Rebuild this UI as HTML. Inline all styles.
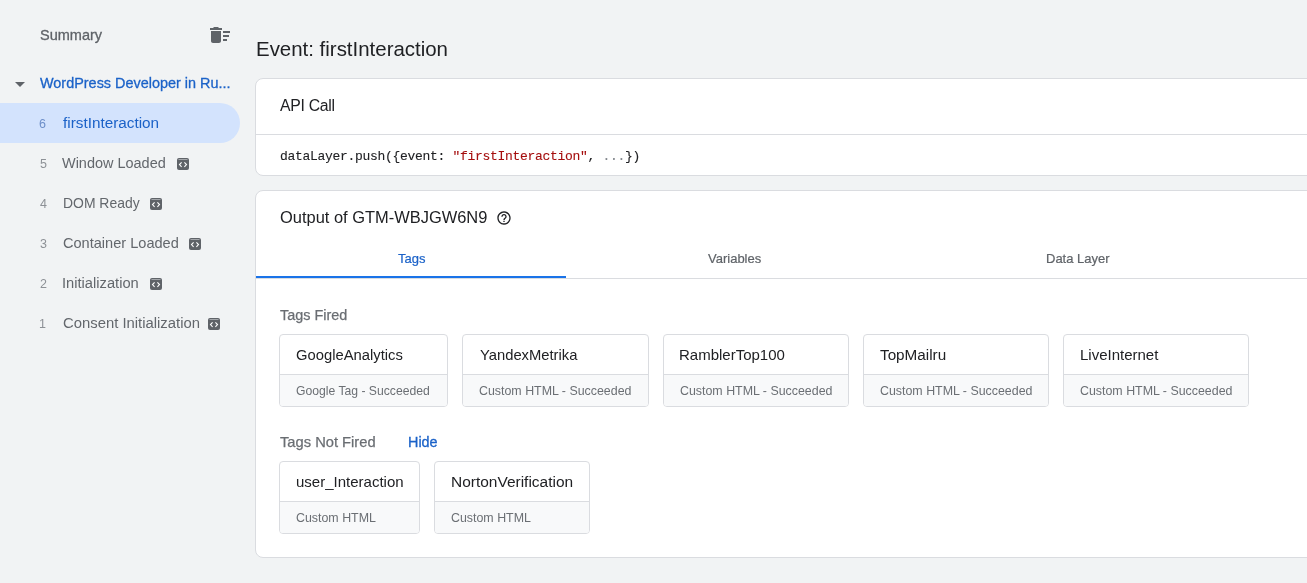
<!DOCTYPE html>
<html><head><meta charset="utf-8">
<style>
*{box-sizing:border-box;margin:0;padding:0}
html,body{width:1307px;height:583px;overflow:hidden;background:#f1f3f4;font-family:"Liberation Sans",sans-serif;color:#202124;position:relative}
.t{position:absolute;white-space:nowrap;will-change:transform}
.ic{position:absolute}
.card{position:absolute;left:255px;width:1100px;background:#fff;border:1px solid #dadce0;border-radius:8px}
.tag{position:absolute;height:73px;background:#fff;border:1px solid #dadce0;border-radius:4px;overflow:hidden}
.tag .h{height:40px;border-bottom:1px solid #dadce0}
.tag .f{height:31px;background:#f8f9fa}
</style></head><body>
<svg class="ic" style="left:208px;top:23px" width="24" height="24" viewBox="0 0 24 24"><path d="M15 16h4v2h-4zm0-8h7v2h-7zm0 4h6v2h-6zM3 18c0 1.1.9 2 2 2h6c1.1 0 2-.9 2-2V8H3v10zM14 5h-3l-1-1H6L5 5H2v2h12z" fill="#5f6368"/></svg>
<svg class="ic" style="left:8px;top:72px" width="24" height="24" viewBox="0 0 24 24"><path d="M7 10l5 5 5-5z" fill="#5f6368"/></svg>
<div style="position:absolute;left:0;top:103px;width:240px;height:40px;background:#d3e3fd;border-radius:0 20px 20px 0"></div>
<svg class="ic" style="left:177px;top:158px" width="12" height="12" viewBox="0 0 12 12"><rect x="0" y="0" width="12" height="12" rx="2" fill="#5f6368"/><rect x="1.5" y="1" width="9" height="1" fill="#a3a6aa"/><path d="M4.6 4.4L2.5 6.6L4.6 8.8M7.4 4.4L9.5 6.6L7.4 8.8" stroke="#fff" stroke-width="1.1" fill="none"/></svg>
<svg class="ic" style="left:150px;top:198px" width="12" height="12" viewBox="0 0 12 12"><rect x="0" y="0" width="12" height="12" rx="2" fill="#5f6368"/><rect x="1.5" y="1" width="9" height="1" fill="#a3a6aa"/><path d="M4.6 4.4L2.5 6.6L4.6 8.8M7.4 4.4L9.5 6.6L7.4 8.8" stroke="#fff" stroke-width="1.1" fill="none"/></svg>
<svg class="ic" style="left:189px;top:238px" width="12" height="12" viewBox="0 0 12 12"><rect x="0" y="0" width="12" height="12" rx="2" fill="#5f6368"/><rect x="1.5" y="1" width="9" height="1" fill="#a3a6aa"/><path d="M4.6 4.4L2.5 6.6L4.6 8.8M7.4 4.4L9.5 6.6L7.4 8.8" stroke="#fff" stroke-width="1.1" fill="none"/></svg>
<svg class="ic" style="left:150px;top:278px" width="12" height="12" viewBox="0 0 12 12"><rect x="0" y="0" width="12" height="12" rx="2" fill="#5f6368"/><rect x="1.5" y="1" width="9" height="1" fill="#a3a6aa"/><path d="M4.6 4.4L2.5 6.6L4.6 8.8M7.4 4.4L9.5 6.6L7.4 8.8" stroke="#fff" stroke-width="1.1" fill="none"/></svg>
<svg class="ic" style="left:208px;top:318px" width="12" height="12" viewBox="0 0 12 12"><rect x="0" y="0" width="12" height="12" rx="2" fill="#5f6368"/><rect x="1.5" y="1" width="9" height="1" fill="#a3a6aa"/><path d="M4.6 4.4L2.5 6.6L4.6 8.8M7.4 4.4L9.5 6.6L7.4 8.8" stroke="#fff" stroke-width="1.1" fill="none"/></svg>
<div class="card" style="top:78px;height:98px"><div style="position:absolute;left:0;right:0;top:55px;height:1px;background:#dadce0"></div></div>
<div class="card" style="top:190px;height:368px">
<div style="position:absolute;left:0;right:0;top:87px;height:1px;background:#dadce0"></div>
<div style="position:absolute;left:0;width:310px;top:85px;height:2px;background:#1a73e8"></div>
</div>
<svg class="ic" style="left:496.2px;top:210.1px" width="16" height="16" viewBox="0 0 24 24"><path d="M11 18h2v-2h-2v2zm1-16C6.48 2 2 6.48 2 12s4.48 10 10 10 10-4.48 10-10S17.52 2 12 2zm0 18c-4.41 0-8-3.59-8-8s3.59-8 8-8 8 3.59 8 8-3.59 8-8 8zm0-14c-2.21 0-4 1.79-4 4h2c0-1.1.9-2 2-2s2 .9 2 2c0 2-3 1.75-3 5h2c0-2.25 3-2.5 3-5 0-2.21-1.79-4-4-4z" fill="#202124"/></svg>
<div class="tag" style="left:279px;top:334px;width:169px"><div class="h"></div><div class="f"></div></div>
<div class="tag" style="left:462px;top:334px;width:187px"><div class="h"></div><div class="f"></div></div>
<div class="tag" style="left:663px;top:334px;width:186px"><div class="h"></div><div class="f"></div></div>
<div class="tag" style="left:863px;top:334px;width:186px"><div class="h"></div><div class="f"></div></div>
<div class="tag" style="left:1063px;top:334px;width:186px"><div class="h"></div><div class="f"></div></div>
<div class="tag" style="left:279px;top:461px;width:141px"><div class="h"></div><div class="f"></div></div>
<div class="tag" style="left:434px;top:461px;width:156px"><div class="h"></div><div class="f"></div></div>
<div class="t" id="summary" style="left:39.90px;top:27.73px;font-size:14.50px;line-height:14.50px;color:#5f6368;-webkit-text-stroke:0.3px #5f6368;">Summary</div>
<div class="t" id="wp" style="left:39.70px;top:75.64px;font-size:14.43px;line-height:14.43px;color:#1b62c8;-webkit-text-stroke:0.3px #1b62c8;">WordPress Developer in Ru...</div>
<div class="t" id="n6" style="left:39.20px;top:118.42px;font-size:12.50px;line-height:12.50px;color:#6d8fc9;">6</div>
<div class="t" id="l6" style="left:62.70px;top:115.30px;font-size:15.30px;line-height:15.30px;color:#1b62c8;">firstInteraction</div>
<div class="t" id="n5" style="left:39.50px;top:158.42px;font-size:12.50px;line-height:12.50px;color:#8d9196;">5</div>
<div class="t" id="l5" style="left:62.00px;top:155.56px;font-size:14.47px;line-height:14.47px;color:#63676c;">Window Loaded</div>
<div class="t" id="n4" style="left:39.50px;top:198.42px;font-size:12.50px;line-height:12.50px;color:#8d9196;">4</div>
<div class="t" id="l4" style="left:62.70px;top:196.56px;font-size:13.93px;line-height:13.93px;color:#63676c;">DOM Ready</div>
<div class="t" id="n3" style="left:39.50px;top:238.42px;font-size:12.50px;line-height:12.50px;color:#8d9196;">3</div>
<div class="t" id="l3" style="left:62.50px;top:235.56px;font-size:14.57px;line-height:14.57px;color:#63676c;">Container Loaded</div>
<div class="t" id="n2" style="left:39.50px;top:278.42px;font-size:12.50px;line-height:12.50px;color:#8d9196;">2</div>
<div class="t" id="l2" style="left:61.50px;top:275.56px;font-size:14.70px;line-height:14.70px;color:#63676c;">Initialization</div>
<div class="t" id="n1" style="left:39.30px;top:318.42px;font-size:12.50px;line-height:12.50px;color:#8d9196;">1</div>
<div class="t" id="l1" style="left:62.90px;top:315.56px;font-size:14.85px;line-height:14.85px;color:#63676c;">Consent Initialization</div>
<div class="t" id="event" style="left:256.30px;top:38.69px;font-size:20.45px;line-height:20.45px;color:#202124;">Event: firstInteraction</div>
<div class="t" id="api" style="left:279.60px;top:97.63px;font-size:15.80px;line-height:15.80px;color:#202124;font-family:'Liberation Sans',sans-serif;letter-spacing:-0.3px;">API Call</div>
<div class="t" id="code" style="left:280.00px;top:150.00px;font-size:13.00px;line-height:13.00px;color:#202124;-webkit-text-stroke:0.1px #202124;font-family:'Liberation Mono',monospace;letter-spacing:-0.3px;">dataLayer.push({event: <span style="color:#a50e0e;-webkit-text-stroke-color:#a50e0e">"firstInteraction"</span>, <span style="color:#80868b;-webkit-text-stroke-color:#80868b">...</span>})</div>
<div class="t" id="output" style="left:280.20px;top:209.08px;font-size:16.45px;line-height:16.45px;color:#202124;">Output of GTM-WBJGW6N9</div>
<div class="t" id="tab1" style="left:397.50px;top:251.66px;font-size:13.00px;line-height:13.00px;color:#1b62c8;-webkit-text-stroke:0.2px #1b62c8;">Tags</div>
<div class="t" id="tab2" style="left:707.50px;top:251.66px;font-size:13.00px;line-height:13.00px;color:#5f6368;-webkit-text-stroke:0.2px #5f6368;">Variables</div>
<div class="t" id="tab3" style="left:1045.70px;top:251.66px;font-size:13.00px;line-height:13.00px;color:#5f6368;-webkit-text-stroke:0.2px #5f6368;">Data Layer</div>
<div class="t" id="fired" style="left:279.80px;top:307.81px;font-size:14.41px;line-height:14.41px;color:#6a6e73;-webkit-text-stroke:0.25px #6a6e73;">Tags Fired</div>
<div class="t" id="notfired" style="left:280.10px;top:434.81px;font-size:14.71px;line-height:14.71px;color:#6a6e73;-webkit-text-stroke:0.25px #6a6e73;">Tags Not Fired</div>
<div class="t" id="hide" style="left:408.40px;top:434.81px;font-size:14.40px;line-height:14.40px;color:#1b62c8;-webkit-text-stroke:0.3px #1b62c8;">Hide</div>
<div class="t" id="t1h" style="left:296.00px;top:348.30px;font-size:14.79px;line-height:14.79px;color:#202124;">GoogleAnalytics</div>
<div class="t" id="t1f" style="left:296.00px;top:384.50px;font-size:12.18px;line-height:12.18px;color:#6b6f74;">Google Tag - Succeeded</div>
<div class="t" id="t2h" style="left:479.60px;top:348.30px;font-size:14.77px;line-height:14.77px;color:#202124;">YandexMetrika</div>
<div class="t" id="t2f" style="left:479.10px;top:384.50px;font-size:12.40px;line-height:12.40px;color:#6b6f74;">Custom HTML - Succeeded</div>
<div class="t" id="t3h" style="left:679.40px;top:347.30px;font-size:15.00px;line-height:15.00px;color:#202124;">RamblerTop100</div>
<div class="t" id="t3f" style="left:679.50px;top:384.50px;font-size:12.40px;line-height:12.40px;color:#6b6f74;">Custom HTML - Succeeded</div>
<div class="t" id="t4h" style="left:879.50px;top:347.30px;font-size:15.28px;line-height:15.28px;color:#202124;">TopMailru</div>
<div class="t" id="t4f" style="left:879.50px;top:384.50px;font-size:12.40px;line-height:12.40px;color:#6b6f74;">Custom HTML - Succeeded</div>
<div class="t" id="t5h" style="left:1080.20px;top:347.30px;font-size:15.00px;line-height:15.00px;color:#202124;">LiveInternet</div>
<div class="t" id="t5f" style="left:1079.80px;top:384.50px;font-size:12.40px;line-height:12.40px;color:#6b6f74;">Custom HTML - Succeeded</div>
<div class="t" id="u1h" style="left:296.00px;top:474.30px;font-size:15.00px;line-height:15.00px;color:#202124;">user_Interaction</div>
<div class="t" id="u1f" style="left:296.00px;top:511.50px;font-size:12.40px;line-height:12.40px;color:#6b6f74;">Custom HTML</div>
<div class="t" id="u2h" style="left:450.50px;top:474.30px;font-size:15.47px;line-height:15.47px;color:#202124;">NortonVerification</div>
<div class="t" id="u2f" style="left:451.00px;top:511.50px;font-size:12.40px;line-height:12.40px;color:#6b6f74;">Custom HTML</div>
</body></html>
